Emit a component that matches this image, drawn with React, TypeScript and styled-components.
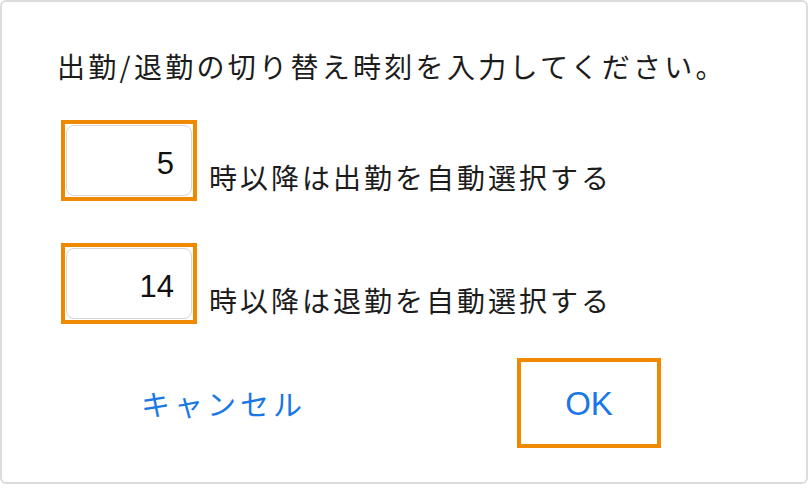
import React, { useState } from 'react';
import styled, { createGlobalStyle } from 'styled-components';

const GlobalStyle = createGlobalStyle`
  html, body {
    margin: 0;
    padding: 0;
    background: #ffffff;
  }
  body {
    font-family: 'Noto Sans CJK JP', 'Noto Sans', sans-serif;
    color: #1a1a1a;
  }
`;

const FONT = `'Noto Sans CJK JP', 'Noto Sans', sans-serif`;

const Frame = styled.div`
  width: 808px;
  height: 484px;
  box-sizing: border-box;
  border: 2px solid #dcdcdc;
  border-radius: 6px;
  background: #ffffff;
  padding: 44px 0 0 55px;
  display: flex;
  flex-direction: column;
`;

const Title = styled.div`
  font-family: ${FONT};
  font-size: 28px;
  line-height: 40px;
  letter-spacing: 3.3px;
  color: #1c1c1c;
  margin: 0 0 34px 0;
`;

const Rows = styled.div`
  display: flex;
  flex-direction: column;
  gap: 42px;
`;

const Row = styled.div`
  display: flex;
  align-items: flex-end;
`;

const Highlight = styled.div`
  width: 136px;
  height: 81px;
  box-sizing: border-box;
  border: 4px solid #ef8900;
  margin-left: 4px;
  padding: 1px;
  display: flex;
`;

const HourInput = styled.input`
  flex: 1;
  min-width: 0;
  box-sizing: border-box;
  border: 1px solid #d6d6d6;
  border-radius: 8px;
  background: #ffffff;
  font-family: 'Liberation Sans', Arial, sans-serif;
  font-size: 31px;
  color: #111111;
  text-align: right;
  padding: 6px 17px 0 0;
  outline: none;
`;

const Label = styled.span`
  font-family: ${FONT};
  font-size: 28px;
  line-height: 36px;
  letter-spacing: 3px;
  color: #1c1c1c;
  margin: 0 0 6px 12px;
`;

const Actions = styled.div`
  display: flex;
  align-items: center;
  margin-top: 34px;
`;

const TextButton = styled.button<{ $outlined?: boolean }>`
  background: none;
  cursor: pointer;
  color: #1a77e6;
  padding: 0;
  box-sizing: border-box;
  display: flex;
  align-items: center;
  justify-content: center;
  border: ${(p) => (p.$outlined ? '4px solid #ef8900' : 'none')};
`;

const CancelButton = styled(TextButton)`
  font-family: ${FONT};
  font-size: 29px;
  letter-spacing: 4px;
  margin-left: 84px;
  height: 90px;
`;

const OkButton = styled(TextButton)`
  font-family: 'Liberation Sans', Arial, sans-serif;
  font-size: 33px;
  width: 144px;
  height: 90px;
  margin-left: 211px;
  padding-top: 2px;
`;

export default function App() {
  const [start, setStart] = useState('5');
  const [end, setEnd] = useState('14');

  return (
    <>
      <GlobalStyle />
      <Frame>
        <Title>出勤/退勤の切り替え時刻を入力してください。</Title>
        <Rows>
          <Row>
            <Highlight>
              <HourInput value={start} onChange={(e) => setStart(e.target.value)} />
            </Highlight>
            <Label>時以降は出勤を自動選択する</Label>
          </Row>
          <Row>
            <Highlight>
              <HourInput value={end} onChange={(e) => setEnd(e.target.value)} />
            </Highlight>
            <Label>時以降は退勤を自動選択する</Label>
          </Row>
        </Rows>
        <Actions>
          <CancelButton>キャンセル</CancelButton>
          <OkButton $outlined>OK</OkButton>
        </Actions>
      </Frame>
    </>
  );
}
